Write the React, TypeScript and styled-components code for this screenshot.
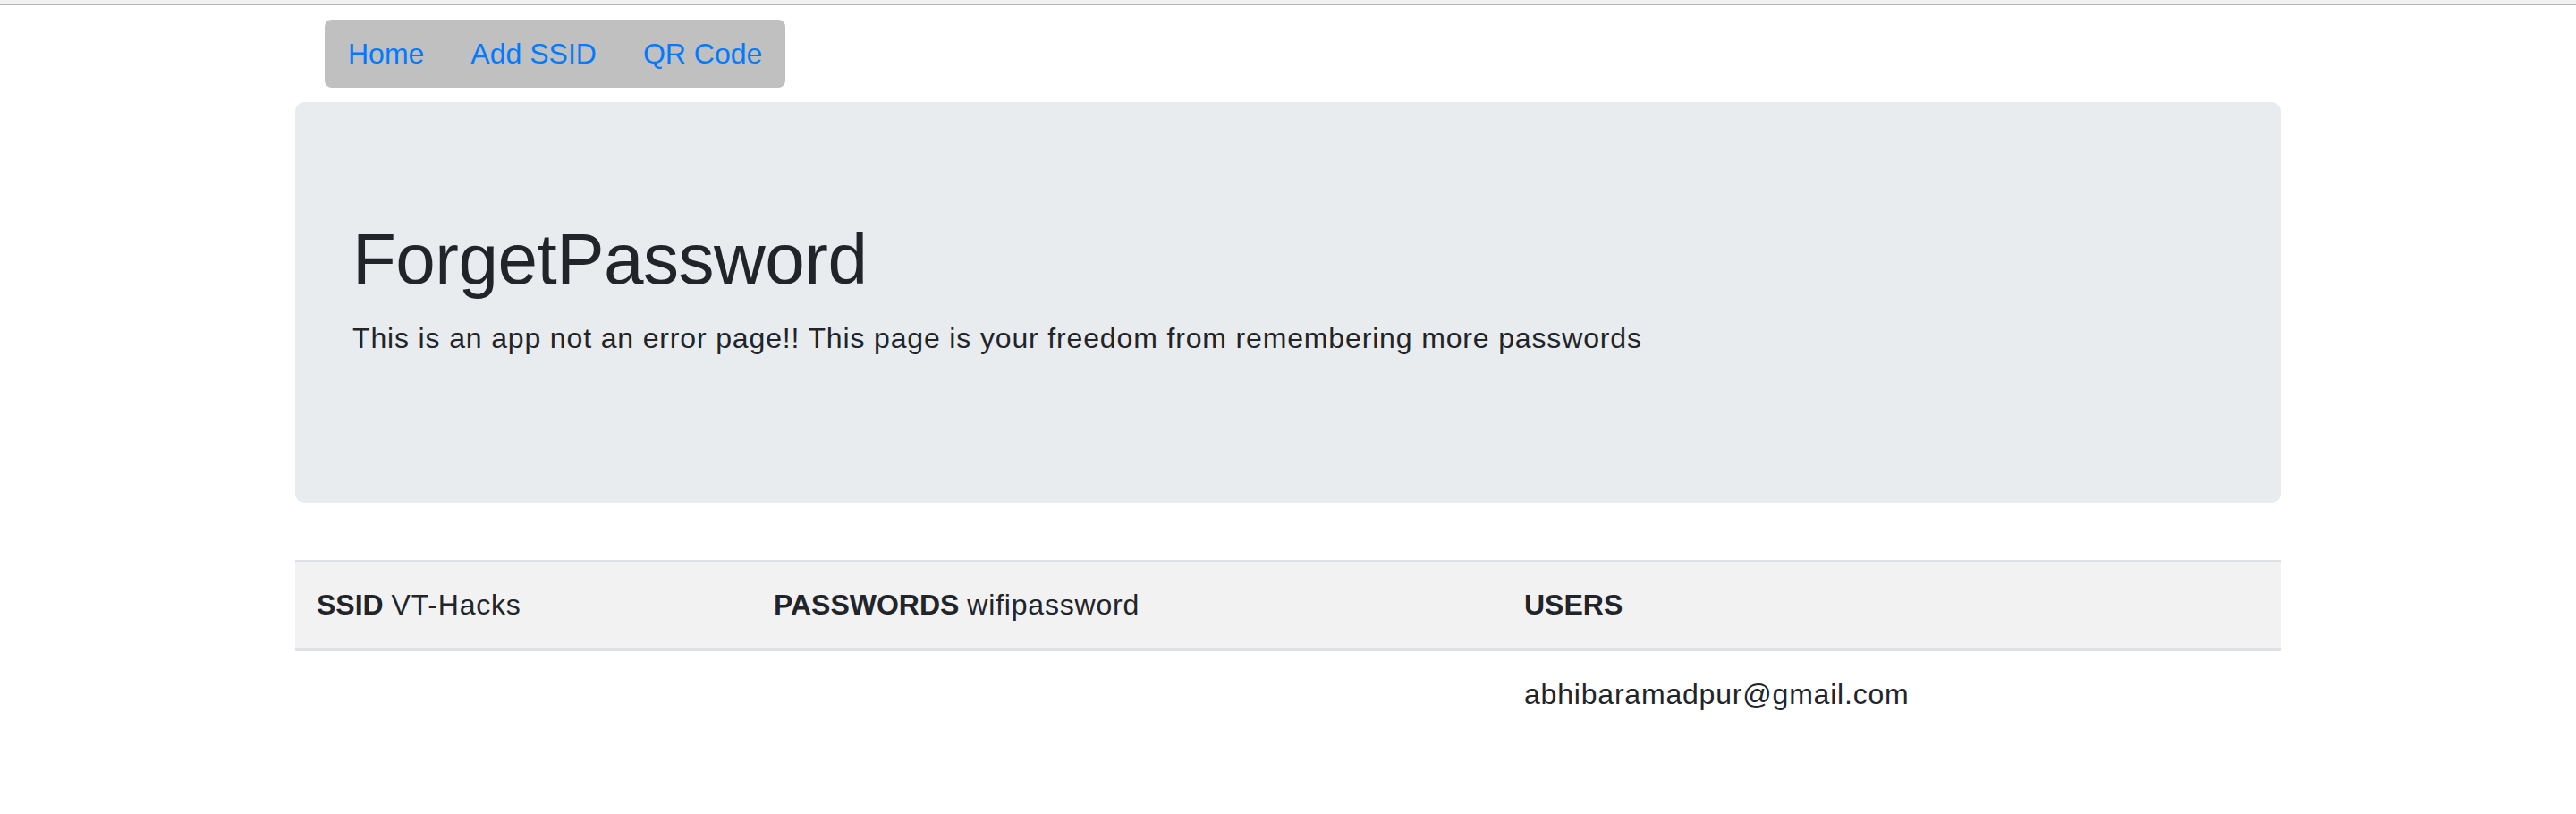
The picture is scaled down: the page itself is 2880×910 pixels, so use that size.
import React from "react";
import styled, { createGlobalStyle } from "styled-components";

const GlobalStyle = createGlobalStyle`
  html, body {
    margin: 0;
    padding: 0;
    background: #ffffff;
  }
  body {
    font-family: "Liberation Sans", Arial, Helvetica, sans-serif;
    font-size: 32px;
    line-height: 1.5;
    color: #212529;
  }
`;

export const TopStrip = styled.div`
  height: 5px;
  background: #f1f1f1;
  border-bottom: 1px solid #b4b4b4;
`;

export const Container = styled.div`
  max-width: 2280px;
  margin: 0 auto;
  padding: 0 30px;
  box-sizing: border-box;
`;

export const Nav = styled.nav`
  display: inline-flex;
  align-items: center;
  margin: 16px 0 16px 33px;
  background: #c0c0c0;
  border-radius: 8px;
`;

export const NavLink = styled.a`
  display: block;
  padding: 14px 26px;
  color: #007bff;
  text-decoration: none;
  cursor: pointer;
`;

export const Jumbotron = styled.div`
  padding: 128px 64px;
  margin-bottom: 64px;
  background: #e9ecef;
  border-radius: 10px;
`;

export const Title = styled.h1`
  margin: 0 0 16px;
  font-size: 80px;
  font-weight: 400;
  line-height: 1.2;
  letter-spacing: -0.5px;
`;

export const Lead = styled.p`
  margin: 0 0 32px;
  letter-spacing: 0.85px;
`;

export const Table = styled.table`
  width: 100%;
  border-collapse: collapse;
`;

export const HeadRow = styled.tr`
  background: #f2f2f2;
`;

export const HeadCell = styled.th<{ $width?: number }>`
  padding: 24px;
  text-align: left;
  font-weight: 400;
  vertical-align: bottom;
  border-top: 2px solid #dee2e6;
  border-bottom: 4px solid #dee2e6;
  width: ${(p) => (p.$width ? `${p.$width}px` : "auto")};
  box-sizing: border-box;
`;

export const Cell = styled.td`
  padding: 24px;
  vertical-align: top;
  letter-spacing: 0.8px;
`;

export const Label = styled.strong`
  font-weight: 700;
`;

export const Value = styled.span`
  letter-spacing: 0.8px;
`;

const App: React.FC = () => {
  return (
    <>
      <GlobalStyle />
      <TopStrip />
      <Container>
        <Nav>
          <NavLink>Home</NavLink>
          <NavLink>Add SSID</NavLink>
          <NavLink>QR Code</NavLink>
        </Nav>

        <Jumbotron>
          <Title>ForgetPassword</Title>
          <Lead>
            This is an app not an error page!! This page is your freedom from
            remembering more passwords
          </Lead>
        </Jumbotron>

        <Table>
          <thead>
            <HeadRow>
              <HeadCell $width={511}>
                <Label>SSID</Label> <Value>VT-Hacks</Value>
              </HeadCell>
              <HeadCell $width={839}>
                <Label>PASSWORDS</Label> <Value>wifipassword</Value>
              </HeadCell>
              <HeadCell>
                <Label>USERS</Label>
              </HeadCell>
            </HeadRow>
          </thead>
          <tbody>
            <tr>
              <Cell />
              <Cell />
              <Cell>abhibaramadpur@gmail.com</Cell>
            </tr>
          </tbody>
        </Table>
      </Container>
    </>
  );
};

export default App;
